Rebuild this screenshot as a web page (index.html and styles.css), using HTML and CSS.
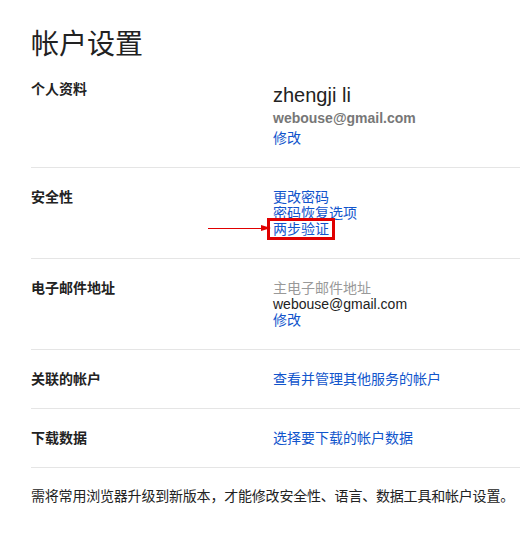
FILE: index.html
```html
<!DOCTYPE html>
<html lang="zh-CN">
<head>
<meta charset="utf-8">
<title>帐户设置</title>
<link rel="stylesheet" href="styles.css">
</head>
<body>
<main class="page">
  <h1 class="title">帐户设置</h1>

  <section class="row row-profile">
    <div class="label">个人资料</div>
    <div class="value">
      <div class="name">zhengji li</div>
      <div class="email-strong">webouse@gmail.com</div>
      <a class="link edit-profile" href="#">修改</a>
    </div>
  </section>

  <section class="row row-bordered">
    <div class="label">安全性</div>
    <div class="value">
      <a class="link" href="#">更改密码</a>
      <a class="link" href="#">密码恢复选项</a>
      <span class="highlight-wrap">
        <span class="arrow"></span>
        <a class="link highlighted" href="#">两步验证</a>
      </span>
    </div>
  </section>

  <section class="row row-bordered">
    <div class="label">电子邮件地址</div>
    <div class="value">
      <div class="muted">主电子邮件地址</div>
      <div class="plain">webouse@gmail.com</div>
      <a class="link" href="#">修改</a>
    </div>
  </section>

  <section class="row row-bordered">
    <div class="label">关联的帐户</div>
    <div class="value">
      <a class="link" href="#">查看并管理其他服务的帐户</a>
    </div>
  </section>

  <section class="row row-bordered row-last">
    <div class="label">下载数据</div>
    <div class="value">
      <a class="link" href="#">选择要下载的帐户数据</a>
    </div>
  </section>

  <p class="note">需将常用浏览器升级到新版本，才能修改安全性、语言、数据工具和帐户设置。</p>
</main>
</body>
</html>
```

FILE: styles.css
```css
html, body {
  margin: 0;
  padding: 0;
  background: #fff;
}

body {
  font-family: "Liberation Sans", "Noto Sans CJK SC", sans-serif;
  font-size: 14px;
  line-height: 16px;
  color: #222;
}

.page {
  padding-left: 31px;
  overflow: hidden;
}

.title {
  margin: 27px 0 18px;
  font-size: 28px;
  line-height: 36px;
  font-weight: normal;
  color: #222;
}

.row {
  display: grid;
  grid-template-columns: 242px 1fr;
  padding: 21px 0 21px;
}

.row-profile {
  padding-top: 0;
}

.row-bordered {
  border-top: 1px solid #e5e5e5;
}

.row-last {
  border-bottom: 1px solid #e5e5e5;
}

.label {
  font-weight: bold;
  color: #222;
  line-height: 16px;
}

.value {
  display: flex;
  flex-direction: column;
  align-items: flex-start;
}

.name {
  font-size: 20px;
  line-height: 28px;
  color: #222;
}

.email-strong {
  font-weight: bold;
  color: #777;
  line-height: 18px;
}

.edit-profile {
  margin-top: 3px;
}

.link {
  color: #15c;
  text-decoration: none;
  line-height: 16px;
}

.muted {
  color: #999;
}

.plain {
  color: #222;
}

.highlight-wrap {
  position: relative;
  display: inline-block;
}

.highlighted {
  display: inline-block;
  outline: 3px solid #e00000;
  outline-offset: 0;
  padding: 0 3px;
  margin: 0 -3px;
}

.arrow {
  position: absolute;
  left: -65px;
  top: 7px;
  width: 53px;
  height: 1px;
  background: #e00000;
}

.arrow::after {
  content: "";
  position: absolute;
  right: -10px;
  top: -3px;
  border-left: 10px solid #e00000;
  border-top: 3.5px solid transparent;
  border-bottom: 3.5px solid transparent;
}

.note {
  margin: 20px 0 0;
  line-height: 16px;
  color: #222;
  white-space: nowrap;
  letter-spacing: -0.2px;
}
```
